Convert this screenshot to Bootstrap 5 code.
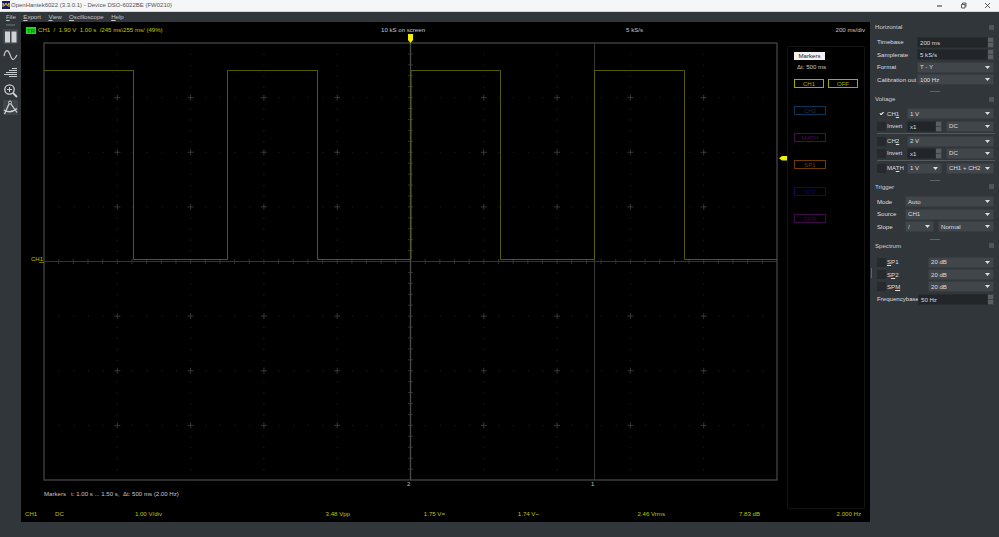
<!DOCTYPE html>
<html lang="en">
<head>
<meta charset="utf-8">
<title>OpenHantek6022</title>
<link href="https://cdn.jsdelivr.net/npm/bootstrap@5.3.0/dist/css/bootstrap.min.css" rel="stylesheet">
<style>
html,body{height:537px;overflow:hidden}
body{width:999px;background:#31363b;color:#dcdee0;font:6.1px/1 "Liberation Sans",Arial,sans-serif}
.titlebar{height:11.5px;background:#f4f6f7;color:#555;font-size:6px;border-bottom:1px solid #d8d8d8}
.applogo{width:8px;height:8px;margin:0 1px 0 2px}
.winbtn{width:24px}
.menubar{height:10.5px;padding-left:6px;gap:7.5px;background:#31363b;color:#c4c6c8}
.work{height:515px}
.toolbar{width:21px;padding-top:2px}
.grip{width:9px;height:2px;margin-bottom:3px;background:#52575c}
.toolbtn{width:15px;height:15px;background:#3f454a;border-radius:1px}
.tool2{height:15px;margin-top:2px}
.scope{width:849px;height:500px;background:#000;color:#c0c000}
.info{height:16px;padding-left:5px;display:grid;grid-template-columns:355px 60px 202px 222px}
.trflag{background:#18e018;color:#0a4a0a;line-height:7px;text-align:center;margin-right:2px;width:10px;height:7px}
.lite{color:#c8c8c8}
.mid{height:471px}
.plotcol{width:766px}
.plot{display:block;width:766px;height:448px;overflow:visible}
.plot text{font:6px "Liberation Sans",Arial,sans-serif}
.markline{height:23px;padding:5px 0 0 23px}
.mpanel{width:78px;margin-top:8px;padding:5px 6px;border:1px solid #131313;border-radius:2px}
.mbtn{width:32px;height:9px;line-height:7px;text-align:center;border:1px solid currentColor}
.mhead{height:8px;width:31px;line-height:8px;text-align:center;background:#f2f2f2;color:#222}
.mdelta{height:14px;line-height:14px;padding-left:3px;color:#c8c8c8}
.mfirst{margin-top:5px}
.mon{color:#a8a800}
.mgap{margin-top:18px}
.c2{color:#0f3355}.c3{color:#4a0a55}.c4{color:#6e3c00}.c5{color:#0a0a62}.c6{color:#3e0a4a}
.stats{height:13px;line-height:9px;padding-left:4px;display:grid;grid-template-columns:30px 30px 77px 188px 95px 94px 126px 95px 101px}
.dock{width:129px;padding:0 5px 0 5px;position:relative}
.dtitle{height:10px;line-height:10px;color:#d0d2d4}
.fl{width:5px;height:5px;background:#5a5f64;opacity:.75}
.rows{display:flex;flex-direction:column;gap:1.4px;padding-left:2px}
.drow{height:11px;display:flex;align-items:center}
.lblA{width:40px;flex:none}
.lblC{width:28px;flex:none}.lblD{width:41px;flex:none}
.lblE{width:20px;flex:none}
.form-select.cb,.form-control.tb{font-size:6.1px;line-height:1;height:11px;min-height:0;border-radius:1px;color:#dcdee0;box-shadow:none}
.form-select.cb{padding:0 7px 0 2px;background-color:#41464b;border:1px solid #383d42;background-size:5px 3px;background-position:right 3px center;
 background-image:url("data:image/svg+xml,%3csvg xmlns='http://www.w3.org/2000/svg' viewBox='0 0 5 3'%3e%3cpath d='M0 0h5L2.5 3z' fill='%23ddd'/%3e%3c/svg%3e")}
.form-control.tb{padding:0 2px;background:#232629;border:1px solid #292d31}
.spinwrap{flex-wrap:nowrap}
.spin{width:7px;flex:none;background:#3c4146;gap:1px;padding:1px}
.spin i{display:block;flex:1;background:#5a5f64}
.w35{width:35px;flex:none}.w29{width:29px;flex:none}
.form-check-input.ck{width:9px;height:9px;margin:0 1px 0 0;flex:none;border:0;border-radius:0;background-color:#26292d}
.form-check-input.ck:checked{background-color:#31363b;background-size:7px 7px}
.sep{height:1px;background:#54595e;margin:.1px -1px .1px 0}
.hgrip{width:10px;height:1px;background:#5f6469;margin:6px auto 1px}
.hgripv{margin-bottom:2px}
.h1st{margin-top:5px}.h2nd{margin-top:4px}.h3rd{margin-top:4.500px}.h4th{margin-top:6px}
.hgripl{margin-top:6.500px}
.vgrip{position:absolute;left:1px;top:246px;width:1px;height:10px;background:#5f6469}
</style>
</head>
<body class="d-flex flex-column">
<header class="titlebar d-flex align-items-center flex-shrink-0">
  <svg class="applogo" viewBox="0 0 8 8"><rect width="8" height="8" fill="#1a1a66"/><path d="M1 6V2l1.500 3L4 2l1.500 3L7 2v4" stroke="#e8c030" fill="none"/></svg>
  <span class="flex-grow-1">OpenHantek6022 (3.3.0.1) - Device DSO-6022BE (FW0210)</span>
  <span class="d-flex">
    <span class="winbtn d-flex justify-content-center"><svg width="7" height="7" viewBox="0 0 7 7"><path d="M1 4h5" stroke="#333"/></svg></span>
    <span class="winbtn d-flex justify-content-center"><svg width="7" height="7" viewBox="0 0 7 7"><path d="M1.500 2.500h3.500v3.500h-3.500zM2.500 2V1h3.500v3.500h-.5" stroke="#333" fill="none" stroke-width=".8"/></svg></span>
    <span class="winbtn d-flex justify-content-center"><svg width="7" height="7" viewBox="0 0 7 7"><path d="M1 1l5 5M6 1L1 6" stroke="#333" stroke-width=".8"/></svg></span>
  </span>
</header>
<nav class="menubar d-flex align-items-center flex-shrink-0">
  <span><u>F</u>ile</span><span><u>E</u>xport</span><span><u>V</u>iew</span><span><u>O</u>scilloscope</span><span><u>H</u>elp</span>
</nav>
<main class="work d-flex">
  <aside class="toolbar d-flex flex-column align-items-center">
    <div class="grip"></div>
    <div class="toolbtn d-flex align-items-center justify-content-center"><svg width="13" height="12" viewBox="0 0 13 12"><path d="M1 .5h5v11H1zM7.500 .5h5v11h-5z" fill="#cfd1d3"/></svg></div>
    <svg class="mt-1" width="15" height="15" viewBox="0 0 15 15"><path d="M1 8C2.500 1 5 1 7 6.500S10 14 14 7" fill="none" stroke="#c8cacc" stroke-width="1.200"/></svg>
    <svg class="mt-1" width="15" height="12" viewBox="0 0 15 12"><path d="M9 1.500h5M6 3.500h8M3 5.500h11M1 7.500h13M6 9.500h8" stroke="#c8cacc" stroke-width="1.100"/></svg>
    <svg class="mt-1" width="15" height="15" viewBox="0 0 15 15"><circle cx="6.500" cy="6.500" r="4.700" fill="none" stroke="#d0d2d4" stroke-width="1.300"/><path d="M10 10l4 4" stroke="#d0d2d4" stroke-width="1.800"/><path d="M4 6.500h5M6.500 4v5" stroke="#d0d2d4"/></svg>
    <div class="toolbtn tool2 d-flex align-items-center justify-content-center"><svg width="15" height="15" viewBox="0 0 15 15"><circle cx="7" cy="2.500" r="1.500" fill="none" stroke="#d0d2d4"/><path d="M6 4L1.500 14M8 4L14 12.500M1 10c4 2.500 9 2 13-1.500" fill="none" stroke="#d0d2d4" stroke-width="1.300"/></svg></div>
  </aside>
  <section class="scope d-flex flex-column">
    <div class="info align-items-center">
      <div class="d-flex align-items-center"><span class="trflag">TR</span><span>CH1&nbsp; /&nbsp; 1.90 V&nbsp; 1.00 s&nbsp; /245 ms\255 ms/ (49%)</span></div>
      <div class="lite text-nowrap">10 kS on screen</div>
      <div class="lite text-end">5 kS/s</div>
      <div class="lite text-end">200 ms/div</div>
    </div>
    <div class="mid d-flex">
      <div class="plotcol">
        <svg class="plot" id="plot" viewBox="21 38 766 448">
          <g id="gridg"></g>
          <rect x="44" y="43" width="733" height="437" fill="none" stroke="#444" stroke-width="1.300"/>
          <path d="M44 261.500H777" stroke="#333" stroke-width="1"/>
          <path d="M410.500 43V480" stroke="#4a4a4a" stroke-width="1.300"/>
          <path d="M594.500 43V480" stroke="#444" stroke-width=".8"/>
          <path d="M44 70.500H133.500V259.500H227.500V70.500H317.500V259.500H411V70.500H500.500V259.500H594.500V70.500H684.500V259.500H777" fill="none" stroke="#626200" stroke-width=".9"/>
          <text x="31" y="260.500" fill="#c0c000">CH1</text>
          <path d="M39 262.500h5" stroke="#c0c000" stroke-width=".6"/>
          <text x="407" y="486" fill="#c0c0c0">2</text>
          <text x="591" y="486" fill="#c0c0c0">1</text>
          <path d="M408 34h5v6l-2.500 3l-2.500-3z" fill="#f2f200"/>
          <path d="M788 156v4.500h-6l-3-2.200l3-2.300z" fill="#f2f200"/>
        </svg>
        <div class="markline lite">Markers&nbsp;&nbsp; t: 1.00 s ... 1.50 s,&nbsp; Δt: 500 ms (2.00 Hz)</div>
      </div>
      <aside class="mpanel d-flex flex-column">
        <div class="mhead">Markers</div>
        <div class="mdelta">Δt: 500 ms</div>
        <div class="d-flex gap-1 mfirst"><div class="mbtn mon">CH1</div><div class="mbtn mon">OFF</div></div>
        <div class="mbtn c2 mgap">CH2</div>
        <div class="mbtn c3 mgap">MATH</div>
        <div class="mbtn c4 mgap">SP1</div>
        <div class="mbtn c5 mgap">SP2</div>
        <div class="mbtn c6 mgap">SPM</div>
      </aside>
    </div>
    <div class="stats">
      <span>CH1</span><span>DC</span><span class="text-end">1.00 V/div</span><span class="text-end">3.48 Vpp</span><span class="text-end">1.75 V=</span><span class="text-end">1.74 V~</span><span class="text-end">2.46 Vrms</span><span class="text-end">7.83 dB</span><span class="text-end">2.000 Hz</span>
    </div>
  </section>
  <aside class="dock d-flex flex-column">
    <div class="dtitle d-flex justify-content-between align-items-center"><span>Horizontal</span><span class="fl"></span></div>
    <div class="rows h1st">
      <div class="drow"><span class="lblA">Timebase</span><div class="input-group spinwrap"><input class="form-control tb" value="200 ms"><div class="spin d-flex flex-column"><i></i><i></i></div></div></div>
      <div class="drow"><span class="lblA">Samplerate</span><div class="input-group spinwrap"><input class="form-control tb" value="5 kS/s"><div class="spin d-flex flex-column"><i></i><i></i></div></div></div>
      <div class="drow"><span class="lblA">Format</span><select class="form-select cb"><option>T - Y</option></select></div>
      <div class="drow"><span class="lblA text-nowrap">Calibration out</span><select class="form-select cb"><option>100 Hz</option></select></div>
    </div>
    <div class="hgrip hgripv"></div>
    <div class="dtitle d-flex justify-content-between align-items-center"><span>Voltage</span><span class="fl"></span></div>
    <div class="rows h2nd">
      <div class="drow"><input class="form-check-input ck" type="checkbox" checked><span class="lblE">CH<u>1</u></span><select class="form-select cb"><option>1 V</option></select></div>
      <div class="drow"><input class="form-check-input ck" type="checkbox"><span class="lblE">Invert</span><div class="input-group spinwrap w35"><input class="form-control tb" value="x1"><div class="spin d-flex flex-column"><i></i><i></i></div></div><select class="form-select cb ms-1"><option>DC</option></select></div>
      <div class="sep"></div>
      <div class="drow"><input class="form-check-input ck" type="checkbox"><span class="lblE">CH<u>2</u></span><select class="form-select cb"><option>2 V</option></select></div>
      <div class="drow"><input class="form-check-input ck" type="checkbox"><span class="lblE">Invert</span><div class="input-group spinwrap w35"><input class="form-control tb" value="x1"><div class="spin d-flex flex-column"><i></i><i></i></div></div><select class="form-select cb ms-1"><option>DC</option></select></div>
      <div class="sep"></div>
      <div class="drow"><input class="form-check-input ck" type="checkbox"><span class="lblE">MA<u>T</u>H</span><select class="form-select cb w35"><option>1 V</option></select><select class="form-select cb ms-1"><option>CH1 + CH2</option></select></div>
    </div>
    <div class="hgrip"></div>
    <div class="dtitle d-flex justify-content-between align-items-center"><span>Trigger</span><span class="fl"></span></div>
    <div class="rows h3rd">
      <div class="drow"><span class="lblC">Mode</span><select class="form-select cb"><option>Auto</option></select></div>
      <div class="drow"><span class="lblC">Source</span><select class="form-select cb"><option>CH1</option></select></div>
      <div class="drow"><span class="lblC">Slope</span><select class="form-select cb w29"><option>/</option></select><select class="form-select cb ms-1"><option>Normal</option></select></div>
    </div>
    <div class="hgrip hgripl"></div>
    <div class="dtitle d-flex justify-content-between align-items-center"><span>Spectrum</span><span class="fl"></span></div>
    <div class="rows h4th">
      <div class="drow"><input class="form-check-input ck" type="checkbox"><span class="lblD"><u>S</u>P1</span><select class="form-select cb"><option>20 dB</option></select></div>
      <div class="drow"><input class="form-check-input ck" type="checkbox"><span class="lblD">S<u>P</u>2</span><select class="form-select cb"><option>20 dB</option></select></div>
      <div class="drow"><input class="form-check-input ck" type="checkbox"><span class="lblD">SP<u>M</u></span><select class="form-select cb"><option>20 dB</option></select></div>
      <div class="drow"><span class="lblD text-nowrap">Frequencybase</span><div class="input-group spinwrap"><input class="form-control tb" value="50 Hz"><div class="spin d-flex flex-column"><i></i><i></i></div></div></div>
    </div>
    <div class="vgrip"></div>
  </aside>
</main>
<script src="https://cdn.jsdelivr.net/npm/bootstrap@5.3.0/dist/js/bootstrap.bundle.min.js"></script>
<script>
(function(){
  var x0=44,y0=43,dx=73.3,dy=54.625,dots='',cross='',ticks='',i,j,k;
  for(i=0;i<=10;i++){for(j=0;j<=8;j++){
    var x=x0+i*dx,y=y0+j*dy;
    if(i>0&&i<10&&j>0&&j<8&&i!==5&&j!==4){cross+='M'+(x-3)+' '+y+'h6M'+x+' '+(y-3)+'v6';}
    for(k=1;k<5;k++){
      if(i<10&&j>0&&j<8&&j!==4)dots+='M'+(x+k*dx/5)+' '+y+'h1';
      if(j<8&&i>0&&i<10&&i!==5)dots+='M'+x+' '+(y+k*dy/5)+'v1';
    }
  }}
  for(i=1;i<50;i++){ticks+='M'+(x0+i*dx/5)+' 259v5';}
  for(i=1;i<40;i++){ticks+='M408 '+(y0+i*dy/5)+'h5';}
  document.getElementById('gridg').innerHTML=
    '<path d="'+dots+'" stroke="#262626"/>'+
    '<path d="'+cross+'" stroke="#444" stroke-width=".8"/>'+
    '<path d="'+ticks+'" stroke="#3c3c3c" stroke-width=".8"/>';
})();
</script>
</body>
</html>
